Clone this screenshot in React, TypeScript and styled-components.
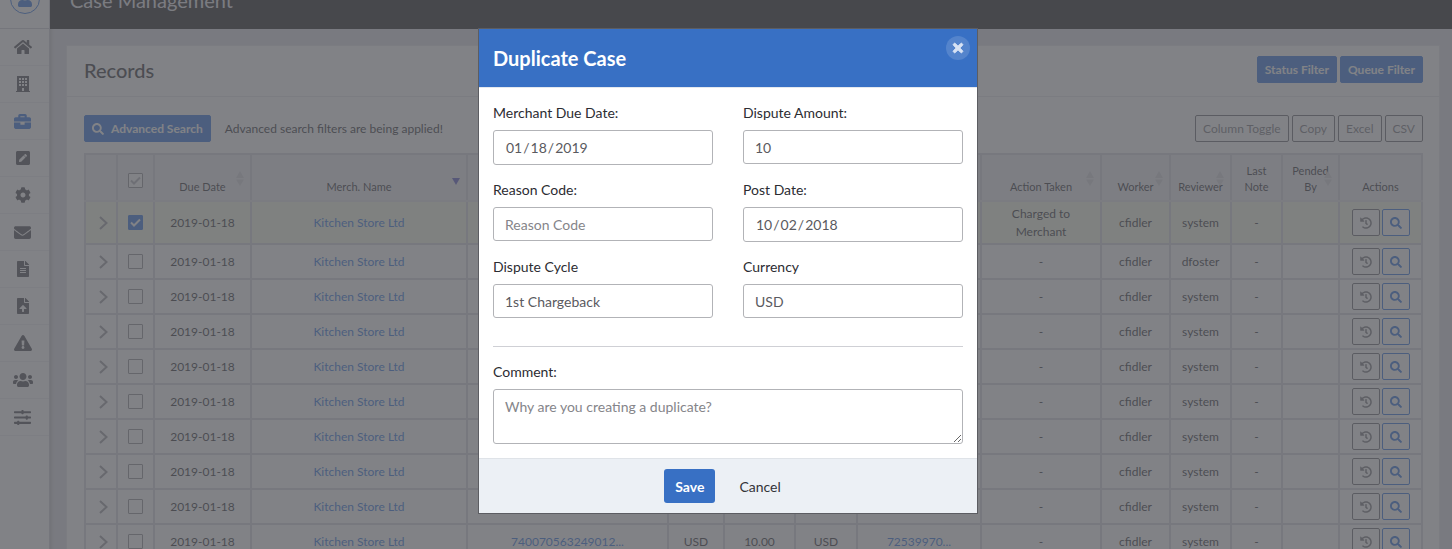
import React from "react";
import styled, { createGlobalStyle } from "styled-components";
import {
  FaHome, FaBriefcase, FaPenSquare, FaCog, FaEnvelope, FaFileAlt, FaFileUpload,
  FaExclamationTriangle, FaUsers, FaSlidersH, FaSearch, FaHistory, FaTimes, FaUser,
} from "react-icons/fa";

const blue = "#3870c4";
const pageBlue = "#2c72e0";
const line = "#d8d8de";

const GlobalStyle = createGlobalStyle`
  *, *::before, *::after { box-sizing: border-box; }
  body {
    margin: 0;
    overflow: hidden;
    background: #e0e0e6;
    color: #2c2c32;
    font-family: Lato, "Liberation Sans", sans-serif;
    font-size: 14px;
  }
  button, input, select, textarea { font: inherit; color: inherit; margin: 0; }
  a { color: ${pageBlue}; text-decoration: none; }
`;

const Shell = styled.div`
  display: flex;
  min-height: 100vh;
`;

const Sidebar = styled.nav`
  flex: none;
  width: 50px;
  background: #fff;
  border-right: 1px solid #cfcfd5;
  box-shadow: 1px 0 4px rgba(0, 0, 0, 0.2);
`;

const AvatarSlot = styled.div`
  display: flex;
  height: 29px;
  padding-bottom: 14px;
  align-items: flex-end;
  justify-content: center;
  border-bottom: 1px solid #cfcfd5;
`;

const Avatar = styled.span`
  display: flex;
  flex: none;
  width: 30px;
  height: 30px;
  align-items: center;
  justify-content: center;
  border: 1px solid ${pageBlue};
  border-radius: 50%;
  color: ${pageBlue};
  font-size: 16px;
`;

const NavLink = styled.a<{ $active?: boolean }>`
  display: flex;
  height: 37px;
  padding-right: 4px;
  align-items: center;
  justify-content: center;
  border-bottom: 1px solid #efeff2;
  color: ${(p) => (p.$active ? pageBlue : "#4a4a50")};
  font-size: 16px;
`;

const Main = styled.main`
  flex: 1;
  min-width: 0;
`;

const TopBar = styled.header`
  display: flex;
  height: 29px;
  padding: 0 20px 17px;
  align-items: flex-end;
  background: #18181b;
`;

const PageTitle = styled.h1`
  flex: none;
  margin: 0;
  color: #e6e6ea;
  font-size: 20px;
  font-weight: 400;
  line-height: 24px;
`;

const Card = styled.section`
  margin: 16px 12px 0 16px;
  background: #fff;
  border: 1px solid #e6e6ea;
`;

const CardHeader = styled.div`
  display: flex;
  height: 51px;
  padding: 0 16px 3px 17px;
  align-items: center;
  justify-content: space-between;
  border-bottom: 1px solid #e6e6ea;
`;

const CardTitle = styled.h2`
  margin: 0;
  font-size: 20px;
  font-weight: 500;
`;

const CardBody = styled.div`
  padding: 18px 16px 0 17px;
`;

const Toolbar = styled.div`
  display: flex;
  align-items: center;
  gap: 14px;
  margin-bottom: 11px;
  font-size: 12px;
`;

const ButtonGroup = styled.div`
  display: flex;
  gap: 3px;
  margin-left: auto;
`;

const SmallButton = styled.button<{ $primary?: boolean }>`
  display: flex;
  height: 27px;
  padding: 0 7px;
  align-items: center;
  gap: 7px;
  border: 1px solid ${(p) => (p.$primary ? pageBlue : "#6a6a70")};
  border-radius: 2px;
  background: ${(p) => (p.$primary ? pageBlue : "#fff")};
  color: ${(p) => (p.$primary ? "#fff" : "#76767c")};
  font-size: 12px;
  font-weight: ${(p) => (p.$primary ? 700 : 400)};
`;

const Table = styled.table`
  width: 100%;
  table-layout: fixed;
  border-collapse: collapse;
  font-size: 12px;
  line-height: 18px;
  text-align: center;
`;

const Th = styled.th`
  position: relative;
  height: 47px;
  padding: 0 4px 5px;
  border: 2px solid ${line};
  border-bottom-color: #e6e6ec;
  background: #f0f0f4;
  font-size: 11px;
  font-weight: 400;
  line-height: 16px;
  vertical-align: bottom;
`;

const CheckTh = styled(Th)`
  padding: 5px 4px 0;
  vertical-align: middle;
`;

const Td = styled.td`
  height: 35px;
  padding: 0 8px;
  border: 2px solid ${line};
`;

const Row = styled.tr<{ $selected?: boolean }>`
  background: ${(p) => (p.$selected ? "#f8fbe8" : "#fff")};
  ${Td} { height: ${(p) => (p.$selected ? 43 : 35)}px; }
`;

const SortMark = styled.svg`
  position: absolute;
  top: 16px;
  right: 5px;
`;

const Checkbox = styled.input`
  display: block;
  appearance: none;
  width: 15px;
  height: 15px;
  border: 1px solid #8e8e94;
  border-radius: 1px;
  background: #fff;
  &:checked {
    border-color: ${pageBlue};
    background: ${pageBlue};
  }
`;

const CheckWrap = styled.label`
  display: grid;
  place-items: center;
  > * { grid-area: 1 / 1; }
  svg { z-index: 1; pointer-events: none; }
`;

const Expander = styled.button`
  display: flex;
  margin-left: 2px;
  padding: 0;
  border: 0;
  background: none;
`;

const Actions = styled.div`
  display: flex;
  justify-content: center;
  gap: 2px;
`;

const IconButton = styled.button<{ $primary?: boolean }>`
  display: flex;
  width: 28px;
  height: 27px;
  padding: 0;
  align-items: center;
  justify-content: center;
  border: 1px solid ${(p) => (p.$primary ? pageBlue : "#6a6a70")};
  border-radius: 2px;
  background: #fff;
  color: ${(p) => (p.$primary ? pageBlue : "#76767c")};
  font-size: 12px;
`;

const Overlay = styled.div`
  position: fixed;
  inset: 0;
  z-index: 10;
  display: flex;
  align-items: flex-start;
  justify-content: center;
  padding: 28px 0 0 4px;
  background: rgba(87, 88, 94, 0.75);
`;

const Dialog = styled.form`
  width: 500px;
  border: 1px solid #5c5d62;
  background: #fff;
`;

const DialogHeader = styled.div`
  display: flex;
  height: 59px;
  padding: 0 7px 0 14px;
  align-items: center;
  justify-content: space-between;
  border-bottom: 1px solid #e4e8ee;
  background: ${blue};
`;

const DialogTitle = styled.h2`
  margin: 0;
  color: #fff;
  font-size: 20px;
  font-weight: 700;
`;

const CloseButton = styled.button`
  display: flex;
  align-self: flex-start;
  width: 24px;
  height: 24px;
  margin-top: 7px;
  padding: 0;
  align-items: center;
  justify-content: center;
  border: 0;
  border-radius: 50%;
  background: rgba(255, 255, 255, 0.14);
  color: #d8e3f4;
  font-size: 14px;
  svg {
    stroke: currentColor;
    stroke-width: 36px;
  }
`;

const DialogBody = styled.div`
  padding: 14px;
`;

const FieldGrid = styled.div`
  display: grid;
  grid-template-columns: 1fr 1fr;
  gap: 14px 30px;
  align-items: start;
`;

const Field = styled.label`
  display: flex;
  flex-direction: column;
  gap: 7px;
  line-height: 21px;
`;

const control = `
  width: 100%;
  padding: 0 11px;
  border: 1px solid #b2b3b7;
  border-radius: 3px;
  background: #fff;
  color: #5a5a60;
  outline: none;
`;

const Input = styled.input`
  ${control}
  height: ${(p) => (p.type === "date" ? 35 : 34)}px;
  &::placeholder { color: #85858a; }
  &::-webkit-calendar-picker-indicator { display: none; }
`;

const Select = styled.select`
  ${control}
  appearance: none;
  height: 34px;
`;

const TextArea = styled.textarea`
  ${control}
  display: block;
  height: 55px;
  padding: 6px 11px;
  line-height: 21px;
  resize: vertical;
  &::placeholder { color: #85858a; }
`;

const Divider = styled.hr`
  margin: 28px 0 14px;
  border: 0;
  border-top: 1px solid #cfd0d5;
`;

const DialogFooter = styled.div`
  display: flex;
  padding: 10px 0;
  justify-content: center;
  gap: 13px;
  border-top: 1px solid #dfe3e8;
  background: #ecf0f5;
`;

const FooterButton = styled.button<{ $primary?: boolean }>`
  height: 34px;
  padding: 0 11px;
  border: 0;
  border-radius: 3px;
  background: ${(p) => (p.$primary ? blue : "transparent")};
  color: ${(p) => (p.$primary ? "#fff" : "#333338")};
  font-weight: ${(p) => (p.$primary ? 700 : 400)};
`;

const BuildingIcon = () => (
  <svg width="14" height="16" viewBox="0 0 14 16" aria-hidden="true">
    <path
      fill="currentColor"
      fillRule="evenodd"
      d="M1 0h12v15h1v1H0v-1h1zM3 2v2h2V2zM6 2v2h2V2zM9 2v2h2V2zM3 5v2h2V5zM6 5v2h2V5zM9 5v2h2V5zM3 8v2h2V8zM6 8v2h2V8zM9 8v2h2V8zM6 12v3h2v-3z"
    />
  </svg>
);

const Tick = ({ color }: { color: string }) => (
  <svg width="11" height="9" viewBox="0 0 11 9" aria-hidden="true">
    <path d="M1 4.5 4 7.5 10 1.5" fill="none" stroke={color} strokeWidth="2" />
  </svg>
);

const Chevron = () => (
  <svg width="16" height="16" viewBox="0 0 16 16" aria-hidden="true">
    <path d="M4 2l6.500 6L4 14" fill="none" stroke="#9a9aa0" strokeWidth="2" />
  </svg>
);

const SortIcon = ({ active }: { active?: boolean }) =>
  active ? (
    <SortMark width="10" height="16" viewBox="0 0 10 16" aria-hidden="true">
      <path d="M1 7h8L5 14z" fill="#5a5ac8" />
    </SortMark>
  ) : (
    <SortMark width="10" height="16" viewBox="0 0 10 16" aria-hidden="true">
      <path d="M1 7h8L5 0zM1 8.500h8L5 15z" fill="#d6d6dc" />
    </SortMark>
  );

const nav = [
  { name: "Home", icon: <FaHome size={18} /> },
  { name: "Merchants", icon: <BuildingIcon /> },
  { name: "Cases", icon: <FaBriefcase size={17} />, active: true },
  { name: "Edit", icon: <FaPenSquare /> },
  { name: "Settings", icon: <FaCog /> },
  { name: "Mail", icon: <FaEnvelope size={17} /> },
  { name: "Documents", icon: <FaFileAlt /> },
  { name: "Upload", icon: <FaFileUpload /> },
  { name: "Alerts", icon: <FaExclamationTriangle size={18} /> },
  { name: "Users", icon: <FaUsers size={20} /> },
  { name: "Options", icon: <FaSlidersH size={17} /> },
];

const columns: { width?: number; label?: string; sort?: "both" | "down"; check?: boolean }[] = [
  { width: 32 },
  { width: 37, check: true },
  { width: 97, label: "Due Date", sort: "both" },
  { label: "Merch. Name", sort: "down" },
  { width: 201 },
  { width: 56 },
  { width: 71 },
  { width: 62 },
  { width: 124 },
  { width: 120, label: "Action Taken", sort: "both" },
  { width: 69, label: "Worker", sort: "both" },
  { width: 61, label: "Reviewer", sort: "both" },
  { width: 51, label: "Last Note" },
  { width: 57, label: "Pended By", sort: "both" },
  { width: 83, label: "Actions" },
];

type Case = {
  action?: string;
  reviewer?: string;
  selected?: boolean;
  reference?: string;
  amount?: string;
  currency?: string;
  card?: string;
};

const cases: Case[] = [
  { action: "Charged to Merchant", selected: true },
  { reviewer: "dfoster" },
  {}, {}, {}, {}, {}, {}, {},
  { reference: "740070563249012...", currency: "USD", amount: "10.00", card: "72539970..." },
];

export default function App() {
  return (
    <>
      <GlobalStyle />
      <Shell>
        <Sidebar>
          <AvatarSlot>
            <Avatar><FaUser /></Avatar>
          </AvatarSlot>
          {nav.map((n) => (
            <NavLink key={n.name} href="#" aria-label={n.name} $active={n.active}>{n.icon}</NavLink>
          ))}
        </Sidebar>
        <Main>
          <TopBar><PageTitle>Case Management</PageTitle></TopBar>
          <Card>
            <CardHeader>
              <CardTitle>Records</CardTitle>
              <ButtonGroup>
                <SmallButton $primary>Status Filter</SmallButton>
                <SmallButton $primary>Queue Filter</SmallButton>
              </ButtonGroup>
            </CardHeader>
            <CardBody>
              <Toolbar>
                <SmallButton $primary><FaSearch />Advanced Search</SmallButton>
                <span>Advanced search filters are being applied!</span>
                <ButtonGroup>
                  <SmallButton>Column Toggle</SmallButton>
                  <SmallButton>Copy</SmallButton>
                  <SmallButton>Excel</SmallButton>
                  <SmallButton>CSV</SmallButton>
                </ButtonGroup>
              </Toolbar>
              <Table>
                <colgroup>
                  {columns.map((c, i) => <col key={i} width={c.width} />)}
                </colgroup>
                <thead>
                  <tr>
                    {columns.map((c, i) =>
                      c.check ? (
                        <CheckTh key={i}>
                          <CheckWrap>
                            <Checkbox type="checkbox" aria-label="Select all" />
                            <Tick color="#b4b4ba" />
                          </CheckWrap>
                        </CheckTh>
                      ) : (
                        <Th key={i}>
                          {c.label}
                          {c.sort && <SortIcon active={c.sort === "down"} />}
                        </Th>
                      )
                    )}
                  </tr>
                </thead>
                <tbody>
                  {cases.map((c, i) => (
                    <Row key={i} $selected={c.selected}>
                      <Td><Expander aria-label="Expand row"><Chevron /></Expander></Td>
                      <Td>
                        <CheckWrap>
                          <Checkbox type="checkbox" aria-label="Select row" defaultChecked={c.selected} />
                          {c.selected && <Tick color="#fff" />}
                        </CheckWrap>
                      </Td>
                      <Td>2019-01-18</Td>
                      <Td><a href="#">Kitchen Store Ltd</a></Td>
                      <Td>{c.reference && <a href="#">{c.reference}</a>}</Td>
                      <Td>{c.currency}</Td>
                      <Td>{c.amount}</Td>
                      <Td>{c.currency}</Td>
                      <Td>{c.card && <a href="#">{c.card}</a>}</Td>
                      <Td>{c.action ?? "-"}</Td>
                      <Td>cfidler</Td>
                      <Td>{c.reviewer ?? "system"}</Td>
                      <Td>-</Td>
                      <Td />
                      <Td>
                        <Actions>
                          <IconButton aria-label="History"><FaHistory /></IconButton>
                          <IconButton $primary aria-label="View"><FaSearch /></IconButton>
                        </Actions>
                      </Td>
                    </Row>
                  ))}
                </tbody>
              </Table>
            </CardBody>
          </Card>
        </Main>
      </Shell>
      <Overlay>
        <Dialog role="dialog" aria-labelledby="dialog-title">
          <DialogHeader>
            <DialogTitle id="dialog-title">Duplicate Case</DialogTitle>
            <CloseButton type="button" aria-label="Close"><FaTimes /></CloseButton>
          </DialogHeader>
          <DialogBody>
            <FieldGrid>
              <Field>Merchant Due Date:<Input type="date" defaultValue="2019-01-18" /></Field>
              <Field>Dispute Amount:<Input type="text" defaultValue="10" /></Field>
              <Field>Reason Code:<Input type="text" placeholder="Reason Code" /></Field>
              <Field>Post Date:<Input type="date" defaultValue="2018-10-02" /></Field>
              <Field>Dispute Cycle<Select><option>1st Chargeback</option></Select></Field>
              <Field>Currency<Select><option>USD</option></Select></Field>
            </FieldGrid>
            <Divider />
            <Field>Comment:<TextArea placeholder="Why are you creating a duplicate?" /></Field>
          </DialogBody>
          <DialogFooter>
            <FooterButton type="submit" $primary>Save</FooterButton>
            <FooterButton type="button">Cancel</FooterButton>
          </DialogFooter>
        </Dialog>
      </Overlay>
    </>
  );
}
